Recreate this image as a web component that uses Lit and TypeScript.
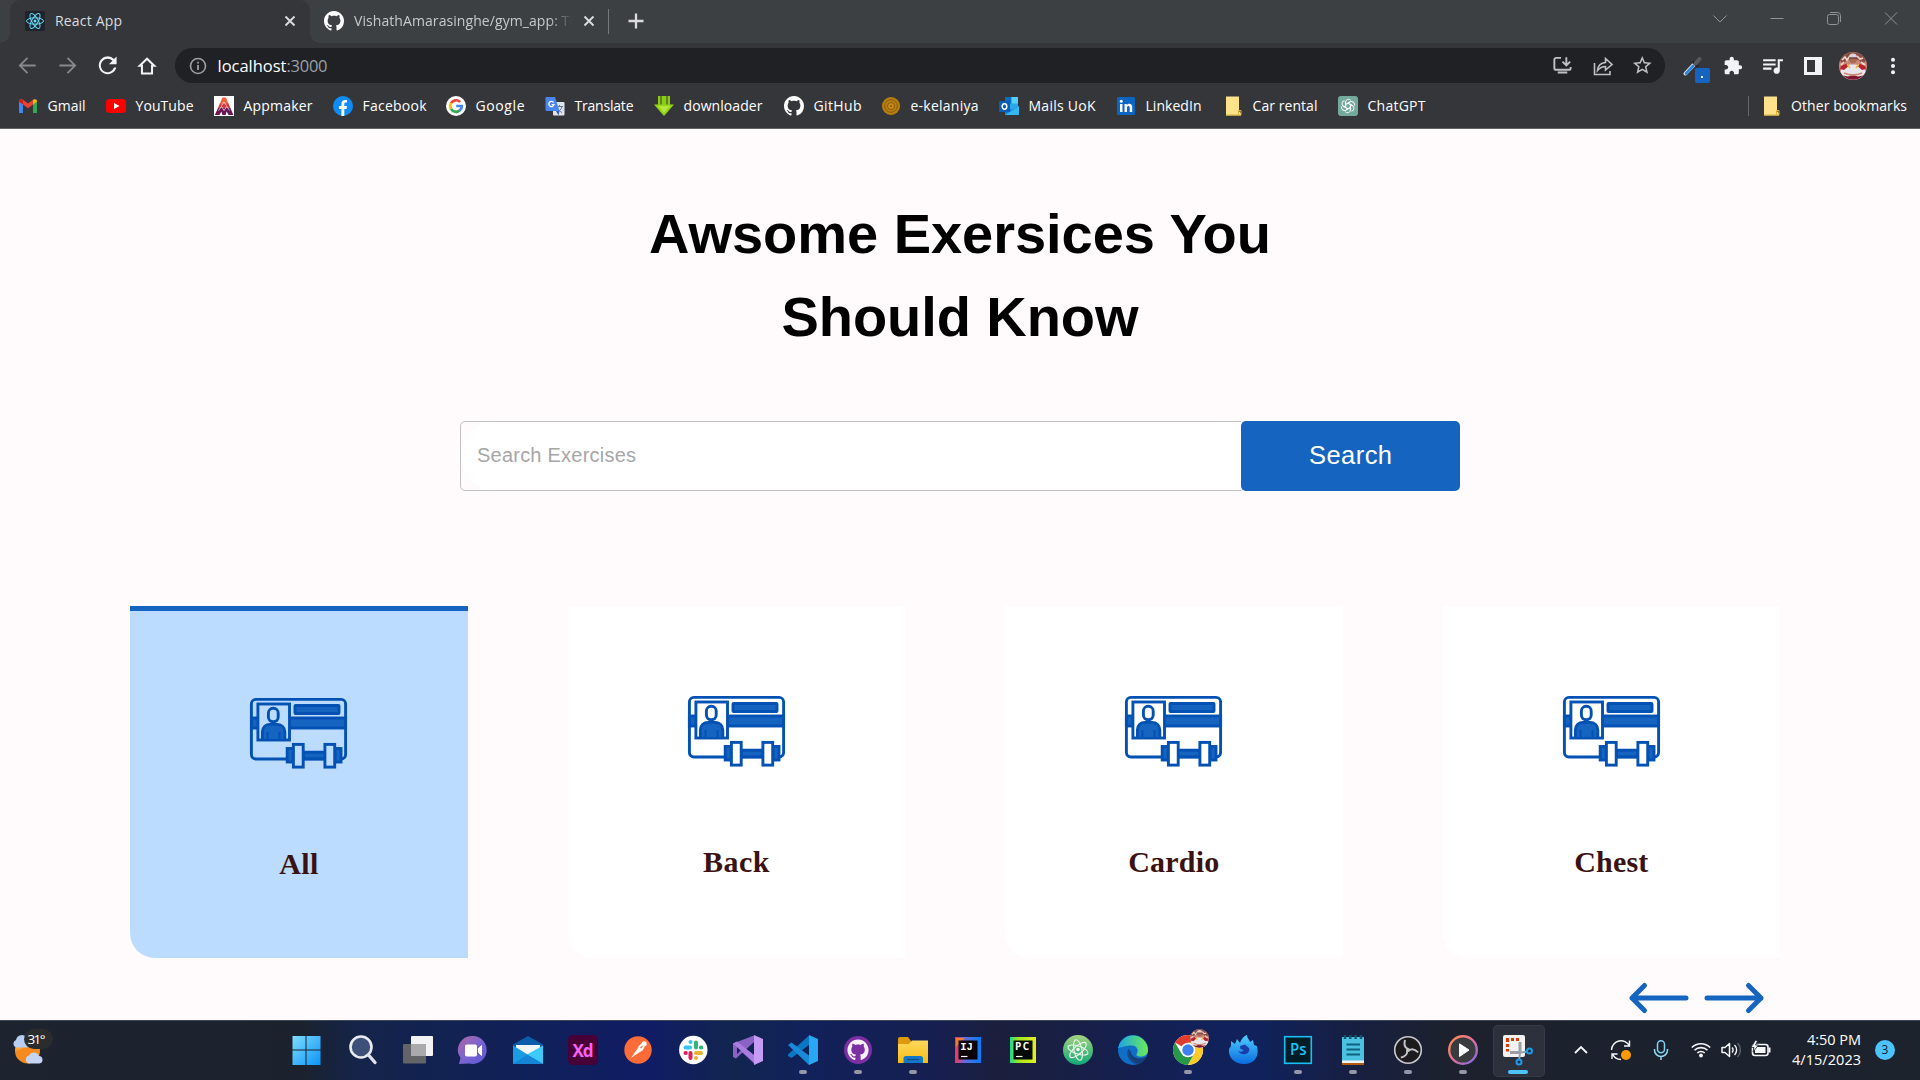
import { LitElement, html, css, svg, nothing } from "lit";
import { customElement, property } from "lit/decorators.js";

/** One line of text whose letter spacing is tuned so that it spans a given width. */
@customElement("fit-text")
class FitText extends LitElement {
  @property({ type: Number }) w = 0;
  @property() text = "";
  static styles = css`
    :host { display: block; white-space: pre; flex: none; }
    .run { display: inline-block; }
  `;
  updated() {
    const run = this.renderRoot.querySelector(".run") as HTMLElement;
    run.style.letterSpacing = "0px";
    const natural = run.getBoundingClientRect().width;
    const gaps = Math.max(1, this.text.length - 1);
    run.style.letterSpacing = `${(this.w - natural) / gaps}px`;
    this.style.width = `${this.w}px`;
  }
  render() {
    return html`<span class="run">${this.text}</span>`;
  }
}

const OCTO =
  "M8 0C3.58 0 0 3.58 0 8c0 3.54 2.29 6.53 5.47 7.59.4.07.55-.17.55-.38 0-.19-.01-.82-.01-1.49-2.01.37-2.53-.49-2.69-.94-.09-.23-.48-.94-.82-1.13-.28-.15-.68-.52-.01-.53.63-.01 1.08.58 1.23.82.72 1.21 1.87.87 2.33.66.07-.52.28-.87.51-1.07-1.78-.2-3.64-.89-3.64-3.95 0-.87.31-1.59.82-2.15-.08-.2-.36-1.02.08-2.12 0 0 .67-.21 2.2.82.64-.18 1.32-.27 2-.27s1.36.09 2 .27c1.53-1.04 2.2-.82 2.2-.82.44 1.1.16 1.92.08 2.12.51.56.82 1.27.82 2.15 0 3.07-1.87 3.75-3.65 3.95.29.25.54.73.54 1.48 0 1.07-.01 1.93-.01 2.2 0 .21.15.46.55.38A8.01 8.01 0 0 0 16 8c0-4.42-3.58-8-8-8z";

const pic = (w: number, h: number, box: string, body: unknown) =>
  html`<svg class="pic" width=${w} height=${h} viewBox=${box}>${body}</svg>`;

const portrait = svg`
  <circle cx="14" cy="14" r="14" fill="#c9897a"/>
  <path d="M1 9A14 14 0 0 1 27 9L23 12 20 8 8 8 4 12Z" fill="#8d4b45"/>
  <path d="M3 8l3-3 2 3 3-4M18 4l3 3 3-1M2 13l3-3M22 10l4 3" stroke="#f1dccf" stroke-width="1.6" fill="none"/>
  <path d="M1.500 20C2 15 7 12.500 14 12.500s12 2.500 12.500 7.500A14 14 0 0 1 1.500 20Z" fill="#e9e6ee"/>
  <path d="M2 14l6-2.500 1 3-4 3.500-4-1ZM26 14l-6-2.500-1 3 4 3.500 4-1Z" fill="#b7222f"/>
  <path d="M8 12l3 4M20 12l-3 4" stroke="#e9b93a" stroke-width="1.500"/>
  <path d="M4 23.500A14 14 0 0 0 24 23.500L19 24.500 14 23 9 24.500Z" fill="#7e1630"/>
  <path d="M5 21q9 4 18 0" stroke="#c98a6d" stroke-width="1.800" fill="none"/>
  <circle cx="14" cy="7.500" r="3.800" fill="#a96a54"/>
  <path d="M10 5.500a4 4 0 0 1 8 0Z" fill="#d8d4dc"/>
  <path d="M10 6h8" stroke="#5b2434"/>`;

const atom = svg`<g fill="none" stroke="#61dafb" stroke-width="1">
  <ellipse cx="10" cy="10" rx="8.500" ry="3.200"/>
  <ellipse cx="10" cy="10" rx="8.500" ry="3.200" transform="rotate(60 10 10)"/>
  <ellipse cx="10" cy="10" rx="8.500" ry="3.200" transform="rotate(120 10 10)"/></g>
  <circle cx="10" cy="10" r="1.500" fill="#61dafb"/>`;

const folder = svg`<path d="M1 0H14V14.500L16 17V19H1Z" fill="#ffe28a"/><path d="M1 18.500H16V14h-2.500v4" fill="none" stroke="#d9b23c"/>`;

const FAV: Record<string, unknown> = {
  gmail: pic(20, 20, "0 0 20 20", svg`<path d="M1 17V5l4 3v9Z" fill="#4285f4"/><path d="M15 17V8l4-3v12Z" fill="#34a853"/><path d="M1 5.500C1 3 3.500 2.500 5 3.800L10 7.500 15 3.800V8.500L10 12.300 5 8.500Z" fill="#ea4335"/><path d="M1 5.500C1 3.500 3 2.500 5 3.800V8.500L1 5.500Z" fill="#c5221f"/><path d="M15 3.800C17 2.500 19 3.500 19 5.500L15 8.500Z" fill="#fbbc04"/>`),
  youtube: pic(20, 20, "0 0 20 20", svg`<rect y="3" width="20" height="14" rx="3.500" fill="#f00"/><path d="M8 7l5.500 3L8 13Z" fill="#fff"/>`),
  appmaker: pic(20, 20, "0 0 20 20", svg`<rect width="20" height="20" fill="#fff"/><path d="M8.500 1.500h3.500l2.500 6.500H5.800Z" fill="#f4623a"/><path d="M5.800 7.500h8.700l2 5H3.800Z" fill="#d43a3f"/><path d="M4 12h12.400l3 7h-4.800l-2-3.500-1 3.500H8.400l-1-3.500-2 3.500H.8Z" fill="#6a1752"/><path d="M7.500 9.500L10 6l2.500 3.500M4.500 14.500l3-4 2.600 4 2.600-4 3 4" fill="none" stroke="#fff" stroke-width=".7"/>`),
  facebook: pic(20, 20, "0 0 20 20", svg`<circle cx="10" cy="10" r="10" fill="#0f8cf5"/><path d="M8.400 20v-7H6v-3h2.400V8c0-2.600 1.500-3.900 3.700-3.900.9 0 1.900.2 1.900.2v2.300h-1.200c-1.200 0-1.500.7-1.500 1.500V10H14l-.4 3h-2.300v7Z" fill="#fff"/>`),
  google: pic(20, 20, "0 0 20 20", svg`<circle cx="10" cy="10" r="10" fill="#fff"/><g fill="none" stroke-width="2.700"><path d="M14.100 5.900A5.800 5.800 0 0 0 5 7.200" stroke="#ea4335"/><path d="M5 7.100a5.900 5.900 0 0 0 0 5.800" stroke="#fbbc05"/><path d="M5 12.800a5.800 5.800 0 0 0 8.800 1.600" stroke="#34a853"/><path d="M13.700 14.500A5.800 5.800 0 0 0 15.800 10H10.200" stroke="#4285f4"/></g>`),
  translate: pic(20, 20, "0 0 20 20", svg`<rect x="8" y="6" width="11.500" height="13.500" rx="1" fill="#dfe3ea"/><path d="M11 10.500h7M14.500 9v1.500M17 10.500c-.7 3-3 5-5 6M12.500 12c.7 2 3 3.800 4.500 4.500" stroke="#5f7d95" fill="none"/><path d="M1.500 1H10l4.500 14H1.500A1 1 0 0 1 .5 14V2A1 1 0 0 1 1.500 1Z" fill="#4a86ee"/><path d="M11 15l2.500 4.500 1-4.500Z" fill="#2f5fc4"/><path d="M8.600 6.500A2.600 2.600 0 1 0 9 8.600H6.700" stroke="#fff" stroke-width="1.300" fill="none"/>`),
  downloader: pic(20, 20, "0 0 20 20", svg`<path d="M4 0h2.500v9H4ZM7.500 0h5v9h-5ZM13.500 0H16v9h-2.500Z" fill="#8ccc12"/><path d="M0 8.500H20L10 20Z" fill="#92d417"/><path d="M4 10H16L10 17Z" fill="#b3e63b"/>`),
  github: pic(20, 20, "0 0 16 16", svg`<path d=${OCTO} fill="#fff"/>`),
  kelaniya: pic(20, 20, "0 0 20 20", svg`<circle cx="10" cy="10" r="9" fill="#b9800f"/><circle cx="10" cy="10" r="6.300" fill="none" stroke="#87590b"/><circle cx="10" cy="10" r="3.500" fill="#c98d1b" stroke="#87590b"/><circle cx="10" cy="10" r="1" fill="#87590b"/>`),
  mails: pic(20, 20, "0 0 20 20", svg`<rect x="6" y="1" width="13" height="13" fill="#28a8ea"/><rect x="6" y="1" width="6.500" height="6.500" fill="#0f6cbd"/><rect x="12.500" y="1" width="6.500" height="6.500" fill="#50d0fa"/><path d="M6 10l7 4 7-4v9H6Z" fill="#1380d6"/><path d="M6 19l14-9v9Z" fill="#35b8f1"/><rect y="5" width="11" height="11" rx="1" fill="#0a5fb4"/><ellipse cx="5.500" cy="10.500" rx="2.300" ry="2.700" fill="none" stroke="#fff" stroke-width="1.500"/>`),
  linkedin: pic(20, 20, "0 0 20 20", svg`<rect x="1" y="1" width="18" height="18" rx="1.500" fill="#0a66c2"/><path d="M4 8h2.500v8H4ZM8.500 8h2.400v1.200c1.400-2.300 5.300-1.800 5.300 1.800v5h-2.500v-4.500c0-2.200-2.700-2-2.700 0V16H8.500Z" fill="#fff"/><circle cx="5.250" cy="5.300" r="1.500" fill="#fff"/>`),
  folder: pic(20, 20, "-2 -.5 20 20", folder),
  chatgpt: pic(20, 20, "0 0 20 20", svg`<rect width="20" height="20" rx="3" fill="#74aa9c"/><g fill="none" stroke="#fff" stroke-width=".9">${[0, 60, 120, 180, 240, 300].map((a) => svg`<path d="M7.600 11.400V6A2.900 2.900 0 0 1 12.800 4.400M8 8.200l4.600-2.700" transform="rotate(${a} 10 10)"/>`)}</g>`),
};

const stroke = (d: string, c: string, w = 2, size = 24) =>
  pic(size, size, "0 0 24 24", svg`<path d=${d} fill="none" stroke=${c} stroke-width=${w}/>`);
const solid = (d: string, c: string, size = 24) =>
  pic(size, size, "0 0 24 24", svg`<path d=${d} fill=${c}/>`);

interface Mark { icon: string; label: string; cell: number; w: number }
const MARKS: Mark[] = [
  { icon: "gmail", label: "Gmail", cell: 88, w: 38 },
  { icon: "youtube", label: "YouTube", cell: 108, w: 58 },
  { icon: "appmaker", label: "Appmaker", cell: 119, w: 69 },
  { icon: "facebook", label: "Facebook", cell: 113, w: 64 },
  { icon: "google", label: "Google", cell: 99, w: 49 },
  { icon: "translate", label: "Translate", cell: 109, w: 59 },
  { icon: "downloader", label: "downloader", cell: 130, w: 79 },
  { icon: "github", label: "GitHub", cell: 97, w: 48 },
  { icon: "kelaniya", label: "e-kelaniya", cell: 118, w: 68 },
  { icon: "mails", label: "Mails UoK", cell: 117, w: 67 },
  { icon: "linkedin", label: "LinkedIn", cell: 107, w: 56 },
  { icon: "folder", label: "Car rental", cell: 115, w: 65 },
  { icon: "chatgpt", label: "ChatGPT", cell: 100, w: 58 },
];

const defs = svg`<defs>
  <linearGradient id="a" x1="0" y1="0" x2="1" y2="1"><stop offset="0" stop-color="#7fdcff"/><stop offset="1" stop-color="#0a94f7"/></linearGradient>
  <linearGradient id="b" x1="0" y1="0" x2="1" y2="1"><stop offset="0" stop-color="#b0659f"/><stop offset=".5" stop-color="#7b66d2"/><stop offset="1" stop-color="#5a55d0"/></linearGradient>
  <linearGradient id="c" x1="0" y1="0" x2="1" y2="0"><stop offset="0" stop-color="#fe315d"/><stop offset=".4" stop-color="#5a6fe0"/><stop offset="1" stop-color="#087cfa"/></linearGradient>
  <linearGradient id="d" x1="0" y1="0" x2="1" y2="0"><stop offset="0" stop-color="#21d789"/><stop offset=".3" stop-color="#9fe421"/><stop offset="1" stop-color="#e6ee22"/></linearGradient>
  <linearGradient id="e" x1="0" y1="0" x2="0" y2="1"><stop offset="0" stop-color="#a4d27f"/><stop offset="1" stop-color="#0fa876"/></linearGradient>
  <linearGradient id="f" x1="0" y1="0" x2="1" y2="0"><stop offset="0" stop-color="#1aa5e8"/><stop offset="1" stop-color="#6bea57"/></linearGradient>
  <linearGradient id="g" x1="0" y1="0" x2="1" y2="1"><stop offset="0" stop-color="#ff9142"/><stop offset=".5" stop-color="#e06fa0"/><stop offset="1" stop-color="#7a6be6"/></linearGradient>
  <linearGradient id="h" x1="0" y1="0" x2="0" y2="1"><stop offset="0" stop-color="#4fd0ff"/><stop offset="1" stop-color="#0a6be0"/></linearGradient>
  <linearGradient id="k" x1="0" y1="0" x2="0" y2="1"><stop offset="0" stop-color="#ffd95c"/><stop offset="1" stop-color="#f9bb16"/></linearGradient>
</defs>`;
const app = (body: unknown) => pic(32, 32, "0 0 32 32", svg`${defs}${body}`);

interface App { art: unknown; state?: "open" | "front" }
const APPS: App[] = [
  { art: app(svg`<path d="M1 2H14V15.400H1ZM15 2H29V15.400H15ZM1 16.500H14V31H1ZM15 16.500H29V31H15Z" transform="translate(-.5 0)" fill="url(#a)"/>`) },
  { art: app(svg`<circle cx="14" cy="13" r="10.500" fill="#3f5078" stroke="#e8ebf0" stroke-width="2.600"/><path d="M21.500 21l6.500 7.500" stroke="#dfe2e8" stroke-width="3.400" stroke-linecap="round"/>`) },
  { art: app(svg`<rect x="1" y="10" width="23" height="19.500" rx="1" fill="#636467"/><rect x="9" y="2" width="22" height="20" rx="1" fill="#f3f3f5"/><path d="M9 10H24V22H9Z" fill="#aaaaac"/>`) },
  { art: app(svg`<path d="M16 2A14 14 0 1 1 12 29.500L2 30 3.500 24A14 14 0 0 1 16 2Z" fill="url(#b)"/><rect x="8" y="10.500" width="12" height="12" rx="1.800" fill="#fff"/><path d="M21.500 14.500l3-3v10l-3-3Z" fill="#fff" stroke="#fff"/>`) },
  { art: app(svg`<path d="M1 10.500L16 2 31 10.500V14H1Z" fill="#0b5cab"/><path d="M4 11H28V24H4Z" fill="#f2f5f8"/><path d="M1 11.500L31 30H1Z" fill="#1a9be4"/><path d="M31 11.500V30L15 20.500Z" fill="#3ccbf8"/><path d="M1 30H31L15.500 20.500Z" fill="#1585d6"/>`) },
  { art: app(svg`<rect x="1" y="1" width="30" height="30" rx="5" fill="#470137"/><text x="16" y="22.500" text-anchor="middle" font-family="Open Sans, sans-serif" font-weight="700" font-size="17" textLength="21" fill="#ff61f6">Xd</text>`) },
  { art: app(svg`<circle cx="16" cy="16" r="13.700" fill="#ff6c37"/><path d="M9 24l8-11.500 4 3.500-8.500 5.500Z" fill="#fff"/><path d="M17 13l4-3.500M19.500 16l2.500-4" stroke="#fff" stroke-width="2"/><circle cx="22.200" cy="9.800" r="2.500" fill="#fff"/>`) },
  { art: app(svg`<circle cx="16.300" cy="16" r="14.200" fill="#fff"/><g stroke-width="4" stroke-linecap="round"><path d="M8.500 13.500H13M13.500 8v.1" stroke="#36c5f0"/><path d="M19 8.500V13.500M24.300 13.500h-.4" stroke="#2eb67d"/><path d="M19 19H24M19 24v.1" stroke="#ecb22e"/><path d="M13.500 19V24M8.500 19h.3" stroke="#e01e5a"/></g>`) },
  { art: app(svg`<path d="M1 10l4-2 19 16-1 6.500Z" fill="#7b4fb5"/><path d="M1 9.500V23l3 1.500L22 8V1.500Z" fill="#8b63c4"/><path d="M5 12v8l4-4Z" fill="#132257"/><path d="M1 9.500l4-2 19 15v8Z" fill="#a97ce0"/><path d="M22 1l9 4V27l-9 4V9Z" fill="#c69bf6"/>`) },
  { state: "open", art: app(svg`<path d="M1 20.500L22 1.500V11L4.500 24 1 22Z" fill="#0b76c2"/><path d="M1 11L4.500 8.500 22 21.500V31Z" fill="#1a8ad8"/><path d="M22 1l9 4V27l-9 4Z" fill="#2aa7f2"/>`) },
  { state: "open", art: app(svg`<circle cx="16" cy="16" r="14" fill="#7b2fa3"/><path d=${OCTO} transform="translate(16 16) scale(1.320) translate(-8 -8)" fill="#f6f0fa"/>`) },
  { state: "open", art: app(svg`<path d="M1 5a2 2 0 0 1 2-2h8l3 4v5H1Z" fill="#dd9a0c"/><path d="M1 10H12l3-3.500H31V29H1Z" fill="url(#k)"/><path d="M6.500 29V24.500A2.500 2.500 0 0 1 9 22H23.500A2.500 2.500 0 0 1 26 24.500V29Z" fill="#1478c8"/><path d="M10 25.500H22" stroke="#0d4f8c" stroke-width="1.400"/>`) },
  { art: app(svg`<rect x="3" y="3" width="26" height="26" fill="url(#c)"/><path d="M4 4h9l-9 9Z" fill="#f97b2c"/><rect x="6.500" y="6.500" width="19" height="19" fill="#0a0208"/><text x="8.300" y="16" font-family="Liberation Mono, monospace" font-weight="700" font-size="10.500" fill="#fff">IJ</text><path d="M9 22.500H15.500" stroke="#fff" stroke-width="1.200"/>`) },
  { art: app(svg`<rect x="3" y="3" width="26" height="26" fill="url(#d)"/><rect x="6.500" y="6.500" width="19" height="19" fill="#060a04"/><text x="8" y="16.200" font-family="Open Sans, sans-serif" font-weight="700" font-size="10" textLength="14" fill="#fff">PC</text><path d="M9 22.500H15.500" stroke="#fff" stroke-width="1.200"/>`) },
  { art: app(svg`<circle cx="16" cy="16" r="15" fill="url(#e)"/><g fill="none" stroke="#eaf7ee" stroke-width="1.100"><ellipse cx="16" cy="16" rx="10.500" ry="4" transform="rotate(18 16 16)"/><ellipse cx="16" cy="16" rx="10.500" ry="4" transform="rotate(78 16 16)"/><ellipse cx="16" cy="16" rx="10.500" ry="4" transform="rotate(138 16 16)"/></g><circle cx="16" cy="15.500" r="1.700" fill="#fff"/>`) },
  { art: app(svg`<circle cx="16" cy="16" r="15" fill="#0f6fc6"/><path d="M1.200 14A15 15 0 0 1 31 16c0 5-4 6.500-7.500 6.500-3 0-4.800-1.300-3.800-2.600 2.500-3.500.3-8.400-5-8.400C8 11.500 3 14 1.200 14Z" fill="url(#f)"/><path d="M11.500 14.500C8 20 12 29 20 30.400A15 15 0 0 0 29 23c-7 4-15 1-15.500-5Z" fill="#164a8c"/><path d="M13.700 16c-.5 5 4 9 10 8.500 3-.3 4.500-1.500 5.500-2-1 3-3 5.500-6 7C15 29 10.500 20 13.700 16Z" fill="#143f78"/>`) },
  { state: "open", art: html`<span class="stack">${app(svg`<circle cx="16" cy="16" r="15" fill="#fff"/><path d="M16 16L3 8.500A15 15 0 0 1 29 8.500L16 9Z" fill="#e33b2e"/><path d="M3 8.500A15 15 0 0 0 16 31L22.500 19.500 9.500 19.500Z" fill="#279847"/><path d="M16 31A15 15 0 0 0 29 8.500H16L22.500 19.500Z" fill="#fccb29"/><circle cx="16" cy="16" r="7.300" fill="#fff"/><circle cx="16" cy="16" r="5.700" fill="#3d80ee"/>`)}<span class="mini">${pic(19, 19, "0 0 28 28", portrait)}</span></span>` },
  { art: app(svg`<path d="M4 7l4 3 2-5 3 4c1-4 4-7 7-8 0 3 2 4 3 7l3-2 1 5 3 1c3 13-5 18-13 18C7 30 1 23 2 15l2-3Z" fill="url(#h)"/><path d="M13 12l5-1.500 4 3.500c2 6-7 9-11 3 3 1.500 5 .5 5.500-1l-3-1Z" fill="#1b3cab"/>`) },
  { state: "open", art: app(svg`<rect x="2.700" y="2.700" width="26.600" height="26.600" fill="#001d26" stroke="#18bff5" stroke-width="1.600"/><text x="8" y="21" font-family="Open Sans, sans-serif" font-weight="600" font-size="16" textLength="16.500" lengthAdjust="spacingAndGlyphs" fill="#18c4fa">Ps</text>`) },
  { state: "open", art: app(svg`<path d="M5 3H27V27H5Z" fill="#4cc1e0"/><path d="M5 26.500H27V29H5Z" fill="#f3f3f3"/><path d="M5 29H27V31H5Z" fill="#b25c12"/><path d="M9.500 10.500H23M9.500 15.500H23M9.500 20.500H23" stroke="#0c627f" stroke-width="1.800"/><path d="M8 1v4M13.300 1v4M18.600 1v4M24 1v4" stroke="#0c566f" stroke-width="2.400"/>`) },
  { state: "open", art: app(svg`<circle cx="16" cy="16" r="13.300" fill="#1c1b1e" stroke="#c9c9cc" stroke-width="1.600"/><g fill="none" stroke="#c4c3c7" stroke-width="2">${[0, 120, 240].map((a) => svg`<path d="M16 15q-5-2-3-9" transform="rotate(${a} 16 16)"/>`)}</g><circle cx="16" cy="16" r="2" fill="#c4c3c7"/>`) },
  { state: "open", art: app(svg`<circle cx="16" cy="16" r="13.800" fill="#3a3b3f" stroke="url(#g)" stroke-width="2.400"/><path d="M12.500 9.800L22 16l-9.500 6.500Z" fill="#fff" stroke="#fff" stroke-linejoin="round"/>`) },
  { state: "front", art: app(svg`<rect x="1" y="1" width="22" height="22" rx="2" fill="#f2f2f4"/><path d="M4 5.500H18M5.500 5V17.500" stroke="#d83b01" stroke-width="3.200" stroke-dasharray="3 2"/><path d="M18 8V19M8 18.500H19" stroke="#9aa0a6" stroke-width="3"/><path d="M19 18.500l6-1M18 20l-1 6" stroke="#8fa4b5" stroke-width="2"/><circle cx="27.500" cy="17" r="2.500" fill="none" stroke="#1e9bea" stroke-width="2"/><circle cx="17" cy="28" r="2.500" fill="none" stroke="#1e9bea" stroke-width="2"/>`) },
];

const membership = html`<svg class="pic" width="97" height="71" viewBox="0 0 97 71">
  <rect class="cut" x="1.400" y="1.400" width="94.200" height="59.600" rx="4.500"/>
  <g stroke="#0351b3" stroke-width="2.900" fill="#1565c0">
    <rect x="1.400" y="20" width="94.200" height="10"/>
    <rect x="1.400" y="1.400" width="94.200" height="59.600" rx="4.500" fill="none"/>
    <rect x="45" y="7.500" width="44" height="8" rx=".5"/>
    <rect class="cut" x="7.900" y="6" width="31.600" height="36"/>
    <path d="M12.400 41V34C12.400 29 16 26.400 20 26.400H27C31 26.400 34.800 29 34.800 34V41"/>
    <path d="M17.500 34V41M29.500 34V41" stroke-width="2"/>
    <rect class="cut" x="18.400" y="10.300" width="9.800" height="13.500" rx="4.700"/>
    <rect x="53" y="54.200" width="22" height="6.600"/>
    <rect x="37.200" y="50.500" width="6" height="13.500"/>
    <rect x="85" y="50.500" width="6" height="13.500"/>
    <rect class="cut" x="43.400" y="46.400" width="9.800" height="22.700"/>
    <rect class="cut" x="74.900" y="46.400" width="9.800" height="22.700"/>
  </g></svg>`;

const CARDS = [
  { label: "All", w: 39, active: true },
  { label: "Back", w: 66.5, active: false },
  { label: "Cardio", w: 91, active: false },
  { label: "Chest", w: 74, active: false },
];

@customElement("app-root")
class AppRoot extends LitElement {
  static styles = css`
    :host { display: flex; flex-direction: column; width: 1920px; height: 1080px; overflow: hidden; background: #fffbfc; font-family: "Open Sans", "Noto Sans", sans-serif; font-size: 14px; color: #fff; }
    * { box-sizing: border-box; }
    .pic { display: block; flex: none; overflow: visible; }

    .tabs { height: 43px; background: #3c4043; display: flex; flex: none; padding-left: 10px; }
    .tab { position: relative; width: 300px; height: 43px; background: #35363a; border-radius: 10px 10px 0 0; display: flex; align-items: center; padding: 0 14px 2px 15px; color: #dadcdf; }
    .tab::before, .tab::after { content: ""; position: absolute; bottom: 0; width: 10px; height: 10px; }
    .tab::before { left: -10px; background: radial-gradient(circle at 0 0, transparent 9.5px, #35363a 10px); }
    .tab::after { right: -10px; background: radial-gradient(circle at 100% 0, transparent 9.5px, #35363a 10px); }
    .tab fit-text { margin-left: 10px; }
    .tab > .x { margin-left: auto; }
    .idle { width: 298px; height: 42px; display: flex; align-items: center; padding: 0 0 1px 14px; color: #c6c9cc; }
    .fade { width: 226px; margin: 0 3px 0 10px; -webkit-mask-image: linear-gradient(90deg, #000 195px, transparent 218px); mask-image: linear-gradient(90deg, #000 195px, transparent 218px); }
    .rule { width: 1px; height: 25px; margin-top: 9px; background: #75797d; }
    .plus { margin: 9px 0 0 14.500px; }
    .win { margin-left: auto; display: flex; padding: 12px 22px 0 0; gap: 43px; }

    .bar { height: 45px; background: #35363a; display: flex; align-items: center; flex: none; padding-left: 7px; }
    .cell { width: 40px; height: 35px; display: flex; align-items: center; justify-content: center; flex: none; }
    .omni { width: 1490px; height: 35px; margin: 0 7.500px 0 8px; border-radius: 18px; background: #202124; display: flex; align-items: center; padding: 0 2.500px 0 12.500px; }
    .url { display: flex; margin-left: 10px; font-size: 16.500px; line-height: 24px; }
    .port { color: #9aa0a6; }
    .push { margin-left: auto; }
    .pen { position: relative; }
    .tag { position: absolute; left: 22px; top: 20px; width: 15px; height: 15px; border-radius: 2px; background: #1565c0; display: flex; align-items: center; justify-content: center; }
    .tag::after { content: ""; width: 2px; height: 2px; margin-top: 3px; background: #fff; }

    .marks { height: 41px; background: #35363a; border-bottom: 1px solid #5f6165; display: flex; flex: none; padding: 0 13px 4px 18px; align-items: center; }
    .mark { display: flex; align-items: center; gap: 9.500px; flex: none; line-height: 20px; }
    .other { margin-left: auto; display: flex; align-items: center; gap: 10px; line-height: 20px; }
    .other .line { width: 1px; height: 20px; background: #63666a; margin-right: 2px; }

    .page { height: 891px; flex: none; padding: 63px 130px 0; display: flex; flex-direction: column; }
    .title { margin: 0; display: flex; flex-direction: column; align-items: center; font: bold 56px/83px "Liberation Sans", Arial, sans-serif; color: #000; }
    .search { width: 1000px; height: 70px; margin: 63px auto 0; display: flex; font-family: "Liberation Sans", Arial, sans-serif; }
    .field { width: 785px; height: 70px; border: 1px solid #c2c0c1; border-radius: 5px; flex: none; overflow: hidden; }
    .inner { height: 68px; border-radius: 40px 0 0 40px; background: #fff; display: flex; align-items: center; padding: 0 0 2px 16px; color: #a6a6a6; font-size: 20px; }
    .go { width: 219px; margin-left: -4px; border-radius: 5px; background: #1565c0; display: flex; align-items: center; justify-content: center; font-size: 25.500px; padding-bottom: 2px; z-index: 1; }
    .cards { display: flex; gap: 100px; margin-top: 115px; }
    .card { width: 337.500px; height: 352px; flex: none; border-bottom-left-radius: 25px; background: #fff; --bg: #fff; display: flex; flex-direction: column; align-items: center; justify-content: center; padding-top: 11.500px; gap: 77px; font: bold 30px/36px "Liberation Serif", "Times New Roman", serif; color: #3a1212; }
    .card.active { border-top: 5px solid #1565c0; background: #bbdbff; --bg: #bbdbff; }
    .cut { fill: var(--bg); }
    .arrows { display: flex; justify-content: flex-end; gap: 15px; margin-top: 25px; padding-right: 26px; }

    .task { height: 60px; flex: none; display: flex; align-items: center; border-top: 1px solid #3c4656; background: linear-gradient(90deg, #1d242f 0, #1b222e 300px, #14244a 360px, #10205a 540px, #101c64 650px, #12254f 735px, #11215a 800px, #161f50 940px, #1b1f3c 1000px, #181f46 1070px, #11215a 1200px, #10225c 1260px, #171f42 1350px, #1c212d 1450px, #1c232d 100%); }
    .weather { position: relative; width: 280.500px; height: 59px; padding: 12px 0 0 12px; }
    .temp { position: absolute; left: 24px; top: 8px; width: 29px; height: 20px; border-radius: 10px; background: #2b2c2d; display: flex; justify-content: center; align-items: center; font-size: 13.500px; line-height: 20px; padding: 0 4px 1px 0; }
    .app { position: relative; width: 55px; height: 59px; display: flex; align-items: center; justify-content: center; flex: none; padding-bottom: 1px; }
    .front::before { content: ""; position: absolute; left: 2.500px; top: 4px; width: 50px; height: 50px; border-radius: 5px; background: rgba(255, 255, 255, .07); border: 1px solid rgba(255, 255, 255, .06); }
    .pill { position: absolute; bottom: 6px; width: 8px; height: 4px; border-radius: 2px; background: #9497a8; }
    .front .pill { width: 20px; background: #4cc2ff; }
    .app .pic { position: relative; }
    .stack { position: relative; display: block; }
    .mini { position: absolute; left: 18px; top: -5px; }
    .tray { display: flex; align-items: center; margin-left: 15.500px; padding-bottom: 1px; }
    .tray .cell.small { width: 30px; }
    .tray .cell.next { margin-left: -5px; }
    .clock { display: flex; flex-direction: column; align-items: flex-end; width: 85px; line-height: 20px; font-size: 14.500px; padding-bottom: 1px; }
    .badge { width: 20px; height: 20px; margin-left: 14px; border-radius: 50%; background: #4cc2ff; color: #10202e; font-size: 12px; line-height: 20px; text-align: center; }
  `;

  private get tabStrip() {
    const x = pic(12, 12, "0 0 12 12", svg`<path d="M1.500 1.500l9 9M10.500 1.500l-9 9" stroke="#dadce0" stroke-width="1.900"/>`);
    return html`<div class="tabs">
      <div class="tab">
        ${pic(20, 20, "0 0 20 20", svg`<rect width="20" height="20" rx="2" fill="#20232a"/>${atom}`)}
        <fit-text .w=${67} .text=${"React App"}></fit-text>
        <span class="x">${x}</span>
      </div>
      <div class="idle">
        ${FAV.github}
        <div class="fade"><fit-text .w=${224} .text=${"VishathAmarasinghe/gym_app: Th"}></fit-text></div>
        ${x}
      </div>
      <div class="rule"></div>
      <div class="plus">${pic(24, 24, "0 0 24 24", svg`<path d="M12 4.500v15M4.500 12h15" stroke="#dadce0" stroke-width="2.300"/>`)}</div>
      <div class="win">
        ${[
          "M.5 3.500l6.500 6.500 6.500-6.500",
          "M.5 6.500h13",
          "M.5 4.500a2 2 0 0 1 2-2h7a2 2 0 0 1 2 2v6a2 2 0 0 1-2 2h-7a2 2 0 0 1-2-2ZM3 .5h7.500a3 3 0 0 1 3 3V10",
          "M1 .5l12 12M13 .5l-12 12",
        ].map((d) => pic(14, 14, "0 0 14 14", svg`<path d=${d} fill="none" stroke="#909497"/>`))}
      </div>
    </div>`;
  }

  private get toolbar() {
    const lit = "#f1f3f4";
    const dim = "#bdc1c6";
    const c = (body: unknown, cls = "") => html`<div class="cell ${cls}">${body}</div>`;
    return html`<div class="bar">
      ${c(stroke("M20.500 12H4.500M12 4L4 12l8 8", "#85888c", 1.900, 23))}
      ${c(stroke("M3.500 12H19.500M12 4l8 8-8 8", "#85888c", 1.900, 23))}
      ${c(solid("M18.800 5.200A9.300 9.300 0 1 0 21.200 14.200H18.800A7.100 7.100 0 1 1 17.200 7.100L13.500 10.800H21.500V2.600Z", lit, 23))}
      ${c(stroke("M12 4L4 11.800h2.500v8.500h11v-8.500H20Z", lit, 2.200, 22))}
      <div class="omni">
        ${pic(20, 20, "0 0 20 20", svg`<circle cx="10" cy="10" r="7.500" fill="none" stroke="#9aa0a6" stroke-width="1.600"/><path d="M10 9v5M10 5.800v1.800" stroke="#9aa0a6" stroke-width="1.800"/>`)}
        <div class="url"><fit-text .w=${69} .text=${"localhost"}></fit-text><fit-text class="port" .w=${41} .text=${":3000"}></fit-text></div>
        <div class="cell push">${stroke("M10.500 4H5.500a2 2 0 0 0-2 2v8.500a2 2 0 0 0 2 2h13a2 2 0 0 0 2-2v-1M16 3.500v8M12 8l4 4 4-4M7 19.300h10", dim, 2, 23)}</div>
        ${c(stroke("M3.500 9v11.500H19V17M6.500 16.500C7 11 10.500 8.800 14.500 8.500V4.500L21 10.500 14.500 16V12.500C11.500 12.500 9 13.500 6.500 16.500Z", dim, 1.600))}
        ${c(solid("M22 9.240l-7.190-.62L12 2 9.190 8.630 2 9.240l5.460 4.730L5.820 21 12 17.270 18.180 21l-1.630-7.030L22 9.240zM12 15.400l-3.760 2.270 1-4.280-3.320-2.880 4.380-.38L12 6.100l1.710 4.040 4.380.38-3.320 2.880 1 4.280L12 15.400z", dim, 22.500))}
      </div>
      <div class="cell pen">
        ${pic(24, 24, "0 0 24 24", svg`<path d="M4.500 19.500L13 10.500" stroke="#dfe8f2" stroke-width="4" stroke-linecap="round"/><path d="M5 19.500L12 12" stroke="#2b84dd" stroke-width="2.600" stroke-linecap="round"/><path d="M11.500 7.500l5.500 5.500" stroke="#26292d" stroke-width="2.500"/><path d="M14.500 9.500L18.500 5" stroke="#55595e" stroke-width="4" stroke-linecap="round"/>`)}
        <span class="tag"></span>
      </div>
      ${c(solid("M20.500 11H19V7c0-1.100-.9-2-2-2h-4V3.500C13 2.120 11.880 1 10.500 1S8 2.120 8 3.500V5H4c-1.100 0-1.990.9-1.990 2v3.800H3.500c1.490 0 2.700 1.210 2.700 2.700s-1.210 2.700-2.700 2.700H2V20c0 1.100.9 2 2 2h3.800v-1.500c0-1.490 1.210-2.700 2.700-2.700 1.490 0 2.700 1.210 2.700 2.700V22H17c1.100 0 2-.9 2-2v-4h1.500c1.380 0 2.500-1.120 2.500-2.500S21.880 11 20.500 11z", lit, 20))}
      ${c(solid("M15 6H3v2h12V6zm0 4H3v2h12v-2zM3 16h8v-2H3v2zM17 6v8.180c-.31-.11-.65-.18-1-.18-1.660 0-3 1.340-3 3s1.340 3 3 3 3-1.340 3-3V8h3V6h-5z", lit, 25))}
      ${c(pic(18, 18, "0 0 18 18", svg`<path d="M0 0H18V18H0ZM3 3V15H11V3Z" fill=${lit} fill-rule="evenodd"/>`))}
      ${c(pic(28, 28, "0 0 28 28", portrait))}
      ${c(pic(24, 24, "0 0 24 24", svg`<circle cx="12" cy="5.700" r="2" fill=${lit}/><circle cx="12" cy="12" r="2" fill=${lit}/><circle cx="12" cy="18.300" r="2" fill=${lit}/>`))}
    </div>`;
  }

  private get bookmarks() {
    return html`<div class="marks">
      ${MARKS.map((m) => html`<div class="mark" style="width:${m.cell}px">${FAV[m.icon]}<fit-text .w=${m.w} .text=${m.label}></fit-text></div>`)}
      <div class="other"><span class="line"></span>${FAV.folder}<fit-text .w=${116} .text=${"Other bookmarks"}></fit-text></div>
    </div>`;
  }

  private get page() {
    const arrow = (d: string) => pic(60, 30, "0 0 60 30", svg`<path d=${d} fill="none" stroke="#1565c0" stroke-width="5" stroke-linecap="round" stroke-linejoin="round"/>`);
    return html`<main class="page">
      <h1 class="title">
        <fit-text .w=${622} .text=${"Awsome Exersices You"}></fit-text>
        <fit-text .w=${357} .text=${"Should Know"}></fit-text>
      </h1>
      <div class="search">
        <div class="field"><div class="inner"><fit-text .w=${159} .text=${"Search Exercises"}></fit-text></div></div>
        <div class="go"><fit-text .w=${83} .text=${"Search"}></fit-text></div>
      </div>
      <div class="cards">
        ${CARDS.map((c) => html`<div class="card ${c.active ? "active" : ""}">${membership}<fit-text .w=${c.w} .text=${c.label}></fit-text></div>`)}
      </div>
      <div class="arrows">
        ${arrow("M57 15H3M15.500 2.500L3 15l12.500 12.500")}
        ${arrow("M3 15H57M44.500 2.500L57 15 44.500 27.500")}
      </div>
    </main>`;
  }

  private get taskbar() {
    const w = "#f4f6f8";
    return html`<footer class="task">
      <div class="weather">
        ${pic(32, 32, "0 0 32 32", svg`<circle cx="15.500" cy="18" r="12.500" fill="#f68a1e"/><path d="M3 18a12.500 12.500 0 0 1 12-12.500L10 16Z" fill="#f9a634"/><path d="M4 14.500a4 4 0 0 1 0-7.500 6 6 0 0 1 11-2v9.500Z" fill="#b9cdf3"/><path d="M16.500 30.500a4.200 4.200 0 0 1 .5-8 5.500 5.500 0 0 1 10 .5 3.800 3.800 0 0 1 .5 7.500Z" fill="#c3d4f5"/>`)}
        <div class="temp"><fit-text .w=${18} .text=${"31°"}></fit-text></div>
      </div>
      ${APPS.map((a) => html`<div class="app ${a.state ?? ""}">${a.art}${a.state ? html`<span class="pill"></span>` : nothing}</div>`)}
      <div class="tray">
        <div class="cell">${pic(16, 16, "0 0 16 16", svg`<path d="M2 11l6-6 6 6" fill="none" stroke=${w} stroke-width="1.800"/>`)}</div>
        <div class="cell">${pic(22, 22, "0 0 22 22", svg`<path d="M1.500 11A9.500 9.500 0 0 1 19.500 7M19.500 1.500V7H14M2 20V15H7.500M2.500 15A9.500 9.500 0 0 0 11 20.500" fill="none" stroke=${w} stroke-width="1.400"/><circle cx="16" cy="16" r="5" fill="#ff9a06"/>`)}</div>
        <div class="cell">${pic(22, 22, "0 0 22 22", svg`<rect x="7.500" y="1.700" width="7" height="12" rx="3.500" fill="none" stroke="#7fd3ee" stroke-width="1.500"/><path d="M4.500 10v1a6.500 6.500 0 0 0 13 0v-1M11 17.500V21" fill="none" stroke="#8fdcf2" stroke-width="1.500"/>`)}</div>
        <div class="cell">${pic(20, 20, "0 0 20 20", svg`<g fill="none" stroke=${w} stroke-width="1.600"><path d="M.8 7.500a13 13 0 0 1 18.400 0M3.500 10.300a9.200 9.200 0 0 1 13 0M6.300 13a5.200 5.200 0 0 1 7.400 0"/></g><circle cx="10" cy="15.500" r="1.900" fill=${w}/>`)}</div>
        <div class="cell small next">${pic(20, 20, "0 0 20 20", svg`<path d="M1 7.500H4L8.500 3.500V16.500L4 12.500H1Z" fill="none" stroke=${w} stroke-width="1.500" stroke-linejoin="round"/><path d="M11 7.500a3.500 3.500 0 0 1 0 5M13.500 5a7 7 0 0 1 0 10" fill="none" stroke=${w} stroke-width="1.400"/><path d="M16.500 3a10 10 0 0 1 0 14" fill="none" stroke="#636a74" stroke-width="1.300"/>`)}</div>
        <div class="cell small">${pic(20, 20, "0 0 20 20", svg`<rect x="1.500" y="4.500" width="15.500" height="11" rx="2.500" fill="none" stroke=${w} stroke-width="1.600"/><rect x="4" y="7" width="10.500" height="6" fill=${w}/><path d="M18.500 7.500v5" stroke=${w} stroke-width="2"/><path d="M4.500 0L0 7.500H3L2 12 7.500 5H4.500L6.500 1Z" fill=${w} stroke="#1c232d" stroke-width=".8"/>`)}</div>
        <div class="clock"><fit-text .w=${54} .text=${"4:50 PM"}></fit-text><fit-text .w=${69} .text=${"4/15/2023"}></fit-text></div>
        <div class="badge">3</div>
      </div>
    </footer>`;
  }

  render() {
    return html`${this.tabStrip}${this.toolbar}${this.bookmarks}${this.page}${this.taskbar}`;
  }
}
